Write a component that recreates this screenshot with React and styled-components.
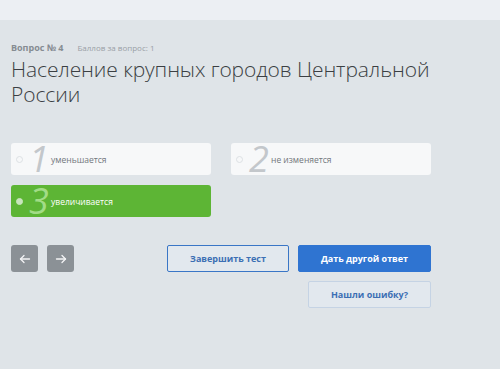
import React from 'react'
import styled, { createGlobalStyle } from 'styled-components'

const Global = createGlobalStyle`
  html, body {
    margin: 0;
    padding: 0;
    background: #dfe4e8;
    font-family: 'Open Sans', 'Liberation Sans', sans-serif;
  }
`

const TopBar = styled.div`
  height: 20px;
  background: #eceff3;
`

const Main = styled.div`
  padding: 21px 0 0 11px;
  width: 420px;
`

const Meta = styled.div`
  display: flex;
  align-items: baseline;
  gap: 14px;
  height: 14px;
  line-height: 14px;
`

const QNum = styled.span`
  font-size: 9px;
  font-weight: 700;
  color: #868c92;
`

const Points = styled.span`
  font-size: 8px;
  color: #9aa0a6;
`

const Title = styled.h1`
  margin: 2px 0 0;
  font-size: 21px;
  font-weight: 300;
  line-height: 25px;
  color: #3b3f43;
  letter-spacing: -0.1px;
`

const Options = styled.div`
  display: grid;
  grid-template-columns: 200px 200px;
  column-gap: 20px;
  row-gap: 10px;
  margin-top: 36px;
`

const Option = styled.div`
  display: flex;
  align-items: center;
  height: 32px;
  border-radius: 3px;
  background: ${p => (p.$active ? '#5db535' : '#f7f8f9')};
`

const Radio = styled.span`
  width: 5px;
  height: 5px;
  margin-left: 5px;
  border-radius: 50%;
  border: 1px solid ${p => (p.$active ? '#c9e5bd' : '#dde1e4')};
  background: ${p => (p.$active ? '#c9e5bd' : '#f7f8f9')};
  flex-shrink: 0;
`

const Digit = styled.span`
  width: 22px;
  margin-left: 5px;
  font-size: 36px;
  font-weight: 400;
  font-style: italic;
  line-height: 32px;
  height: 32px;
  color: ${p => (p.$active ? '#a2dc86' : '#c3c7cb')};
  text-align: center;
`

const Label = styled.span`
  margin-left: 1px;
  font-size: 8.5px;
  color: ${p => (p.$active ? '#ffffff' : '#72777c')};
`

const Bottom = styled.div`
  display: flex;
  justify-content: space-between;
  margin-top: 28px;
`

const Nav = styled.div`
  display: flex;
  gap: 9px;
`

const NavBtn = styled.button`
  width: 27px;
  height: 27px;
  border: none;
  border-radius: 3px;
  background: #8b9196;
  display: flex;
  align-items: center;
  justify-content: center;
  padding: 0;
`

const Actions = styled.div`
  display: flex;
  flex-direction: column;
  align-items: flex-end;
  gap: 9px;
`

const Row = styled.div`
  display: flex;
  gap: 9px;
`

const Btn = styled.button`
  height: 27px;
  width: ${p => p.$w}px;
  border-radius: 2px;
  font-family: 'Open Sans', 'Liberation Sans', sans-serif;
  font-size: 9px;
  font-weight: 700;
  padding: 0;
  ${p =>
    p.$primary
      ? 'background: #2f74d1; color: #ffffff; border: 1px solid #2f74d1;'
      : p.$soft
      ? 'background: #e2e8ee; color: #3c6fb4; border: 1px solid #c5d3e4;'
      : 'background: #e2e8ee; color: #3c6fb4; border: 1px solid #3a76c6;'}
`

const Arrow = ({ dir }) => (
  <svg width="12" height="10" viewBox="0 0 12 10" fill="none" stroke="#f3f4f5" strokeWidth="1.3" strokeLinecap="round" strokeLinejoin="round">
    {dir === 'left' ? (
      <>
        <path d="M10.5 5H1.5" />
        <path d="M5 1.5L1.5 5L5 8.5" />
      </>
    ) : (
      <>
        <path d="M1.5 5H10.5" />
        <path d="M7 1.5L10.5 5L7 8.5" />
      </>
    )}
  </svg>
)

const answers = [
  { n: '1', text: 'уменьшается' },
  { n: '2', text: 'не изменяется' },
  { n: '3', text: 'увеличивается', active: true },
]

export default function App() {
  return (
    <>
      <Global />
      <TopBar />
      <Main>
        <Meta>
          <QNum>Вопрос № 4</QNum>
          <Points>Баллов за вопрос: 1</Points>
        </Meta>
        <Title>
          Население крупных городов Центральной
          <br />
          России
        </Title>
        <Options>
          {answers.map(a => (
            <Option key={a.n} $active={a.active}>
              <Radio $active={a.active} />
              <Digit $active={a.active}>{a.n}</Digit>
              <Label $active={a.active}>{a.text}</Label>
            </Option>
          ))}
        </Options>
        <Bottom>
          <Nav>
            <NavBtn><Arrow dir="left" /></NavBtn>
            <NavBtn><Arrow dir="right" /></NavBtn>
          </Nav>
          <Actions>
            <Row>
              <Btn $w={122}>Завершить тест</Btn>
              <Btn $w={133} $primary>Дать другой ответ</Btn>
            </Row>
            <Btn $w={123} $soft>Нашли ошибку?</Btn>
          </Actions>
        </Bottom>
      </Main>
    </>
  )
}
